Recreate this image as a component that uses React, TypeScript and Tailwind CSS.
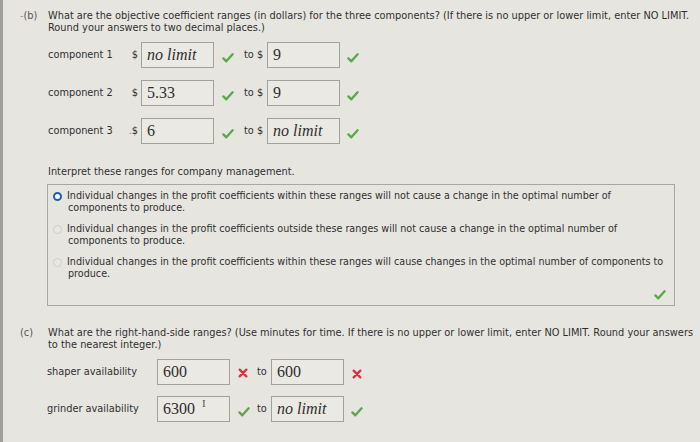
const FONT = "font-['DejaVu_Sans',Verdana,sans-serif]";

function Tick({ className = '' }: { className?: string }) {
  return (
    <svg viewBox="0 0 14 12" className={`h-[10px] w-[12px] ${className}`}>
      <path d="M1.5 6.5 L5 10 L12.5 1.5" fill="none" stroke="#5aa84a" strokeWidth="2.8" strokeLinecap="round" strokeLinejoin="round" />
    </svg>
  );
}

function Cross() {
  return (
    <svg viewBox="0 0 12 12" className="h-[10px] w-[10px]">
      <path d="M2 2 L10 10 M10 2 L2 10" stroke="#d8323c" strokeWidth="2.8" strokeLinecap="round" />
    </svg>
  );
}

function Box({ value, italic, className = '' }: { value: string; italic?: boolean; className?: string }) {
  return (
    <div
      className={`flex h-[26px] w-[73px] items-center border border-[#a3a19c] bg-[#ebe9e4] pl-[5px] font-['Liberation_Serif',serif] text-[16px] text-[#2e2e2e] ${italic ? 'italic' : ''} ${className}`}
    >
      {value}
    </div>
  );
}

type CoefRow = { label: string; from: string; fromItalic?: boolean; to: string; toItalic?: boolean; dot?: boolean };

const coefRows: CoefRow[] = [
  { label: 'component 1', from: 'no limit', fromItalic: true, to: '9' },
  { label: 'component 2', from: '5.33', to: '9' },
  { label: 'component 3', from: '6', to: 'no limit', toItalic: true, dot: true },
];

const options = [
  ['Individual changes in the profit coefficients within these ranges will not cause a change in the optimal number of', 'components to produce.'],
  ['Individual changes in the profit coefficients outside these ranges will not cause a change in the optimal number of', 'components to produce.'],
  ['Individual changes in the profit coefficients within these ranges will cause changes in the optimal number of components to', 'produce.'],
];

export default function App() {
  return (
    <div className={`relative h-[442px] w-[700px] overflow-hidden border-l-[3px] border-[#a09f9b] bg-[#e7e5e0] ${FONT} text-[9.8px] leading-[12px] text-[#303030]`}>
      {/* part b */}
      <div className="flex pt-[10px]">
        <div className="w-[45px] pl-[17px] text-[#555]">
          <span className="text-[#999]">-</span>(b)
        </div>
        <div className="whitespace-nowrap">
          What are the objective coefficient ranges (in dollars) for the three components? (If there is no upper or lower limit, enter NO LIMIT.
          <br />
          Round your answers to two decimal places.)
        </div>
      </div>

      <div className="mt-[8px] flex flex-col gap-[12px] pl-[45px]">
        {coefRows.map((r) => (
          <div key={r.label} className="flex items-center">
            <div className="w-[76px]">{r.label}</div>
            <div className="w-[17px] text-right pr-[3px]">
              {r.dot && <span className="text-[#888]">.</span>}$
            </div>
            <Box value={r.from} italic={r.fromItalic} />
            <div className="ml-[8px] mt-[6px] w-[14px]">
              <Tick />
            </div>
            <div className="ml-[8px] w-[23px]">to $</div>
            <Box value={r.to} italic={r.toItalic} />
            <div className="ml-[7px] mt-[6px]">
              <Tick />
            </div>
          </div>
        ))}
      </div>

      <div className="mt-[22px] pl-[45px]">Interpret these ranges for company management.</div>

      <div className="ml-[44px] mt-[6px] flex h-[122px] w-[628px] flex-col border border-[#a9a7a2] px-[5px] pt-[5px] text-[9.6px]">
        {options.map((o, i) => (
          <div key={i} className="mb-[9px] flex">
            <div className="mr-[5px] mt-[2px] flex h-[9px] w-[9px] shrink-0 items-center justify-center rounded-full">
              {i === 0 ? (
                <div className="h-[9px] w-[9px] rounded-full border-[2.5px] border-[#1f5fae] bg-white" />
              ) : (
                <div className="h-[9px] w-[9px] rounded-full border border-[#cfcdc8] bg-[#e9e7e2]" />
              )}
            </div>
            <div className="whitespace-nowrap">
              {o[0]}
              <br />
              <span className="pl-[1px]">{o[1]}</span>
            </div>
          </div>
        ))}
        <div className="mt-auto flex justify-end pb-[5px] pr-[3px]">
          <Tick />
        </div>
      </div>

      {/* part c */}
      <div className="mt-[21px] flex">
        <div className="w-[45px] pl-[17px] text-[#555]">(c)</div>
        <div className="whitespace-nowrap">
          What are the right-hand-side ranges? (Use minutes for time. If there is no upper or lower limit, enter NO LIMIT. Round your answers
          <br />
          to the nearest integer.)
        </div>
      </div>

      <div className="mt-[8px] flex flex-col gap-[11px] pl-[44px]">
        <div className="flex items-center">
          <div className="w-[110px]">shaper availability</div>
          <Box value="600" />
          <div className="ml-[8px] mt-[2px] w-[12px]">
            <Cross />
          </div>
          <div className="ml-[7px] w-[14px]">to</div>
          <Box value="600" />
          <div className="ml-[8px] mt-[4px]">
            <Cross />
          </div>
        </div>
        <div className="flex items-center">
          <div className="w-[110px]">grinder availability</div>
          <div className="relative">
            <Box value="6300" />
            <span className="absolute left-[45px] top-[1px] font-['Liberation_Serif',serif] text-[11px] text-[#555]">I</span>
          </div>
          <div className="ml-[8px] mt-[6px] w-[12px]">
            <Tick />
          </div>
          <div className="ml-[7px] w-[14px]">to</div>
          <Box value="no limit" italic />
          <div className="ml-[7px] mt-[6px]">
            <Tick />
          </div>
        </div>
      </div>
    </div>
  );
}
